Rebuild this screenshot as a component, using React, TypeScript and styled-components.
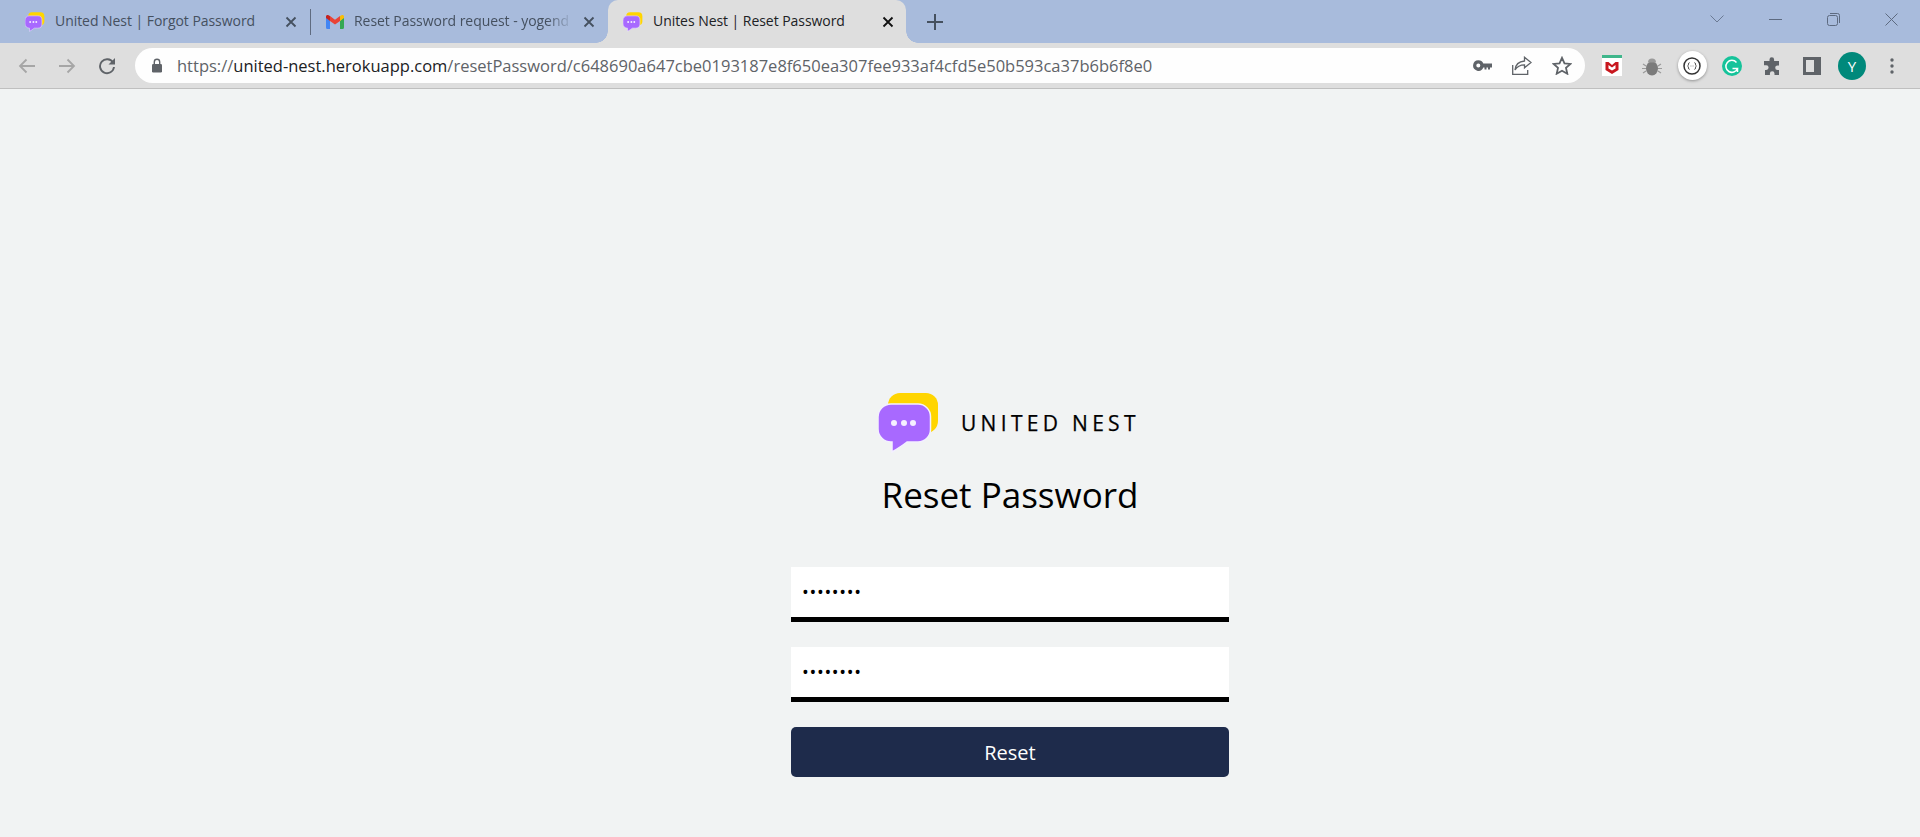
import React from "react";
import styled, { createGlobalStyle } from "styled-components";

const Global = createGlobalStyle`
  html, body { margin: 0; padding: 0; background: #f1f3f3; }
  * { box-sizing: border-box; }
  body { font-family: "Open Sans", "Noto Sans", sans-serif; }
`;

const Shell = styled.div`
  width: 1920px;
  height: 837px;
  display: flex;
  flex-direction: column;
  overflow: hidden;
`;

const TabStrip = styled.div`
  height: 43px;
  background: #a8bbdc;
  display: flex;
  align-items: stretch;
  padding-left: 10px;
`;

const Tab = styled.div<{ $w: number; $active?: boolean }>`
  position: relative;
  width: ${(p) => p.$w}px;
  flex: none;
  display: flex;
  align-items: center;
  padding-left: 15px;
  background: ${(p) => (p.$active ? "#dedede" : "transparent")};
  border-radius: ${(p) => (p.$active ? "10px 10px 0 0" : "0")};
  color: ${(p) => (p.$active ? "#202124" : "#45505f")};
  ${(p) =>
    p.$active
      ? `
    &::before, &::after {
      content: "";
      position: absolute;
      bottom: 0;
      width: 12px;
      height: 12px;
    }
    &::before {
      left: -12px;
      background: radial-gradient(circle at 0 0, transparent 11.5px, #dedede 12px);
    }
    &::after {
      right: -12px;
      background: radial-gradient(circle at 100% 0, transparent 11.5px, #dedede 12px);
    }
  `
      : ""}
`;

const TabTitle = styled.span<{ $w: number; $fade?: boolean }>`
  width: ${(p) => p.$w}px;
  margin-left: 10px;
  padding-bottom: 3px;
  font-family: "Open Sans", sans-serif;
  font-size: 14px;
  letter-spacing: -0.05px;
  white-space: nowrap;
  ${(p) =>
    p.$fade
      ? `-webkit-mask-image: linear-gradient(90deg, #000 88%, transparent 100%); mask-image: linear-gradient(90deg, #000 88%, transparent 100%);`
      : ""}
`;

const TabClose = styled.svg<{ $right: number }>`
  width: 12px;
  height: 12px;
  flex: none;
  margin-left: auto;
  margin-right: ${(p) => p.$right}px;
`;

const TabDivider = styled.div`
  width: 1px;
  height: 26px;
  align-self: center;
  background: #5f6b80;
  flex: none;
`;

const TabGap = styled.div<{ $w: number }>`
  width: ${(p) => p.$w}px;
  flex: none;
`;

const NewTab = styled.svg`
  width: 16px;
  height: 16px;
  flex: none;
  align-self: center;
  margin-left: 21px;
`;

const WindowControls = styled.div`
  margin-left: auto;
  display: flex;
  height: 43px;
`;

const WindowButton = styled.div`
  width: 58px;
  display: flex;
  align-items: center;
  justify-content: center;
  padding-bottom: 5px;
`;

const Toolbar = styled.div`
  height: 46px;
  background: #dedede;
  border-bottom: 1px solid #bfbfbf;
  display: flex;
  align-items: center;
  padding: 5px 8px 5px 7px;
`;

const NavButton = styled.div`
  width: 40px;
  height: 35px;
  flex: none;
  display: flex;
  align-items: center;
  justify-content: center;
`;

const Omnibox = styled.div`
  width: 1450px;
  height: 35px;
  flex: none;
  margin: 0 7px 0 8px;
  background: #fefefe;
  border-radius: 18px;
  display: flex;
  align-items: center;
  padding-left: 16px;
`;

const UrlText = styled.div`
  margin-left: 14px;
  font-family: "Open Sans", sans-serif;
  font-size: 16.5px;
  color: #5f6368;
  white-space: nowrap;
`;

const UrlHost = styled.span`
  color: #202124;
`;

const OmniIcons = styled.div`
  margin-left: auto;
  margin-right: 3px;
  display: flex;
  align-items: center;
`;

const OmniIcon = styled.div`
  width: 40px;
  display: flex;
  justify-content: center;
  align-items: center;
`;

const ExtensionHalo = styled.div`
  width: 29px;
  height: 29px;
  border-radius: 50%;
  background: #fff;
  box-shadow: 0 1px 3px rgba(0, 0, 0, 0.35);
  display: flex;
  align-items: center;
  justify-content: center;
`;

const Avatar = styled.div`
  width: 28px;
  height: 28px;
  border-radius: 50%;
  background: #00897b;
  color: #fff;
  font-family: "Open Sans", sans-serif;
  font-size: 15px;
  display: flex;
  align-items: center;
  justify-content: center;
`;

const Page = styled.main`
  flex: 1;
  background: #f1f3f3;
  display: flex;
  flex-direction: column;
  align-items: center;
  padding: 304px 0 0 100px;
`;

const Brand = styled.div`
  display: flex;
  align-items: center;
  width: 264px;
  height: 60px;
`;

const BrandName = styled.div`
  margin-left: 21px;
  font-family: "Open Sans", sans-serif;
  font-size: 21px;
  font-weight: 400;
  letter-spacing: 4.3px;
  color: #000;
  white-space: nowrap;
  -webkit-text-stroke: 0.25px #000;
`;

const Title = styled.h1`
  margin: 17px 0 0;
  font-family: "Open Sans", sans-serif;
  font-size: 35px;
  line-height: 49px;
  font-weight: 400;
  color: #000;
`;

const Form = styled.form`
  margin-top: 48px;
  width: 438px;
  display: flex;
  flex-direction: column;
  gap: 25px;
`;

const PasswordInput = styled.input`
  display: block;
  width: 100%;
  height: 55px;
  border: 0;
  border-bottom: 5px solid #000;
  background: #fff;
  outline: none;
  padding: 0 11px 1px;
  font-family: "Open Sans", sans-serif;
  font-size: 18px;
  letter-spacing: 0.7px;
  color: #000;
`;

const ResetButton = styled.button`
  width: 100%;
  height: 50px;
  border: 0;
  border-radius: 5px;
  background: #1e2b4b;
  color: #fff;
  font-family: "Open Sans", sans-serif;
  font-size: 20px;
`;

const LogoShapes = () => (
  <>
    <path d="M22 0h26a12 12 0 0 1 12 12v16a12 12 0 0 1-12 12H22a12 12 0 0 1-12-12V12A12 12 0 0 1 22 0Z" fill="#ffd500" />
    <path
      d="M13 11h27a12.500 12.500 0 0 1 12.500 12.500v13A12.500 12.500 0 0 1 40 49H29C24 53 19 56 14 59V49A13 13 0 0 1 0 36V24A13 13 0 0 1 13 11Z"
      fill="#a869ff"
      stroke="#f3f0ff"
      strokeWidth="1.500"
    />
    <circle cx="16" cy="30" r="3" fill="#f5f0ff" />
    <circle cx="26" cy="30" r="3" fill="#f5f0ff" />
    <circle cx="35" cy="30" r="3" fill="#f5f0ff" />
  </>
);

const Favicon = () => (
  <svg width="20" height="20" viewBox="0 0 62 60" style={{ flex: "none" }}>
    <LogoShapes />
  </svg>
);

const Gmail = () => (
  <svg width="18" height="14" viewBox="0 0 18 14" style={{ flex: "none" }}>
    <path d="M0 2v10.500A1.500 1.500 0 0 0 1.500 14H4V6Z" fill="#4285f4" />
    <path d="M14 14h2.500a1.500 1.500 0 0 0 1.500-1.500V2l-4 4Z" fill="#34a853" />
    <path d="M14 1v5l4-3V1.500C18 .2 16.500-.5 15.500.3Z" fill="#fbbc04" />
    <path d="M4 6V1l5 3.800L14 1v5L9 9.500Z" fill="#ea4335" />
    <path d="M0 1.500V3l4 3V1L2.500.3C1.500-.5 0 .2 0 1.500Z" fill="#c5221f" />
  </svg>
);

const CloseIcon = ({ color, right }: { color: string; right: number }) => (
  <TabClose $right={right} viewBox="0 0 12 12">
    <path d="M1.500 1.500l9 9M10.500 1.500l-9 9" stroke={color} strokeWidth="1.800" fill="none" />
  </TabClose>
);

const App = () => (
  <Shell>
    <Global />
    <TabStrip>
      <Tab $w={300}>
        <Favicon />
        <TabTitle $w={212}>United Nest | Forgot Password</TabTitle>
        <CloseIcon color="#45505f" right={13} />
      </Tab>
      <TabDivider />
      <Tab $w={285}>
        <Gmail />
        <TabTitle $w={219} $fade>
          Reset Password request - yogend
        </TabTitle>
        <CloseIcon color="#45505f" right={1} />
      </Tab>
      <TabGap $w={12} />
      <Tab $w={298} $active>
        <Favicon />
        <TabTitle $w={212}>Unites Nest | Reset Password</TabTitle>
        <CloseIcon color="#111" right={12} />
      </Tab>
      <NewTab viewBox="0 0 16 16">
        <path d="M8 0v16M0 8h16" stroke="#45505f" strokeWidth="2" fill="none" />
      </NewTab>
      <WindowControls>
        <WindowButton>
          <svg width="14" height="8" viewBox="0 0 14 8">
            <path d="M.5.500 7 7 13.500.500" stroke="#6b7a94" fill="none" />
          </svg>
        </WindowButton>
        <WindowButton>
          <svg width="13" height="1" viewBox="0 0 13 1">
            <path d="M0 .500h13" stroke="#5d6a80" fill="none" />
          </svg>
        </WindowButton>
        <WindowButton>
          <svg width="13" height="13" viewBox="0 0 13 13">
            <rect x=".5" y="2.500" width="10" height="10" rx="2" stroke="#5d6a80" fill="none" />
            <path d="M3 .500h7.500a2 2 0 0 1 2 2V10" stroke="#5d6a80" fill="none" />
          </svg>
        </WindowButton>
        <WindowButton>
          <svg width="13" height="13" viewBox="0 0 13 13">
            <path d="M.5.500l12 12M12.500.500l-12 12" stroke="#5d6a80" fill="none" />
          </svg>
        </WindowButton>
      </WindowControls>
    </TabStrip>
    <Toolbar>
      <NavButton>
        <svg width="18" height="16" viewBox="0 0 18 16">
          <path d="M17 8H2M8.500 1.500 2 8l6.500 6.500" stroke="#a6a6a6" strokeWidth="1.800" fill="none" />
        </svg>
      </NavButton>
      <NavButton>
        <svg width="18" height="16" viewBox="0 0 18 16">
          <path d="M1 8h15M9.500 1.500 16 8l-6.500 6.500" stroke="#a6a6a6" strokeWidth="1.800" fill="none" />
        </svg>
      </NavButton>
      <NavButton>
        <svg width="18" height="18" viewBox="0 0 18 18">
          <path d="M15 5.500A7 7 0 1 0 16 10" stroke="#5f6368" strokeWidth="1.900" fill="none" />
          <path d="M17 1v6.500h-6.500Z" fill="#5f6368" />
        </svg>
      </NavButton>
      <Omnibox>
        <svg width="12" height="15" viewBox="0 0 12 15" style={{ flex: "none" }}>
          <rect x="1" y="6" width="10" height="8.500" rx="1.200" fill="#5f6368" />
          <path d="M3.300 6V4a2.700 2.700 0 0 1 5.400 0v2" stroke="#5f6368" strokeWidth="1.400" fill="none" />
        </svg>
        <UrlText>
          https://<UrlHost>united-nest.herokuapp.com</UrlHost>
          /resetPassword/c648690a647cbe0193187e8f650ea307fee933af4cfd5e50b593ca37b6b6f8e0
        </UrlText>
        <OmniIcons>
          <OmniIcon>
            <svg width="19" height="11" viewBox="0 0 19 11">
              <path
                fillRule="evenodd"
                d="M5.300.2A5.300 5.300 0 0 1 10.300 3.500H19V7.500H17V9.500H15V7.500H13.500V9.500H11.500V7.500H10.300A5.300 5.300 0 1 1 5.300.2ZM5.300 3.500a2 2 0 1 0 0 4 2 2 0 0 0 0-4Z"
                fill="#5f6368"
              />
            </svg>
          </OmniIcon>
          <OmniIcon>
            <svg width="20" height="19" viewBox="0 0 20 19">
              <path d="M.7 9v9.300h15V14M12.500 1.200 19 6.500l-6.500 5.300V8.800C8 8.800 5 10.500 3 14c.5-5.500 4-8.500 9.500-9Z" stroke="#5f6368" strokeWidth="1.300" fill="none" />
            </svg>
          </OmniIcon>
          <OmniIcon>
            <svg width="20" height="19" viewBox="0 0 20 19">
              <path d="M10 1.800l2.500 5.500 5.900.6-4.400 4 1.300 5.800L10 14.700l-5.300 3 1.300-5.800-4.400-4 5.900-.6Z" stroke="#5f6368" strokeWidth="1.800" fill="none" />
            </svg>
          </OmniIcon>
        </OmniIcons>
      </Omnibox>
      <NavButton>
        <svg width="20" height="21" viewBox="0 0 20 21">
          <rect width="20" height="21" fill="#fff" />
          <rect width="20" height="3" fill="#3fb68b" />
          <path d="M3.500 7h3L10 10l3.500-3h3v8L10 19l-6.500-4Z" fill="#c8171e" />
          <path d="M6.500 10v3.500L10 15.500l3.500-2V10L10 12.500Z" fill="#fff" />
        </svg>
      </NavButton>
      <NavButton>
        <svg width="20" height="20" viewBox="0 0 20 20">
          <ellipse cx="10" cy="12.500" rx="6" ry="7" fill="#7b7b7b" />
          <path d="M6 6.500a4 4 0 0 1 8 0Z" fill="#9a9a9a" />
          <path d="M1 8l3 2M19 8l-3 2M0 12.500h4M20 12.500h-4M1 17l3-2M19 17l-3-2" stroke="#9a9a9a" strokeWidth="1.200" />
        </svg>
      </NavButton>
      <NavButton>
        <ExtensionHalo>
          <svg width="18" height="18" viewBox="0 0 18 18">
            <circle cx="9" cy="9" r="8" stroke="#333" strokeWidth="1.500" fill="none" />
            <path d="M6.500 5.500C5 5.500 6 8.800 4.600 9 6 9.200 5 12.500 6.500 12.500M11.500 5.500C13 5.500 12 8.800 13.400 9 12 9.200 13 12.500 11.500 12.500" stroke="#333" strokeWidth=".9" fill="none" />
            <path d="M7.500 9h.6M8.700 9h.6M9.900 9h.6" stroke="#777" strokeWidth=".9" />
          </svg>
        </ExtensionHalo>
      </NavButton>
      <NavButton>
        <svg width="20" height="20" viewBox="0 0 20 20">
          <circle cx="10" cy="10" r="10" fill="#15c39a" />
          <path d="M14.500 6.500A6 6 0 1 0 15.500 12.500H10.500M15.500 12.500V16" stroke="#fff" strokeWidth="1.500" fill="none" />
        </svg>
      </NavButton>
      <NavButton>
        <svg width="18" height="18" viewBox="0 0 18 18">
          <path d="M6.500 2.500a2.300 2.300 0 0 1 4.600 0V4H16v4.500h-1.500a2.300 2.300 0 0 0 0 4.600H16V18H11.500v-1.500a2.300 2.300 0 0 0-4.600 0V18H2v-5h1.200a2.400 2.400 0 0 0 0-4.800H1V4h5.500Z" fill="#5f6368" />
        </svg>
      </NavButton>
      <NavButton>
        <svg width="18" height="18" viewBox="0 0 18 18">
          <path d="M0 0h18v18H0Zm3 3v12h8V3Z" fill="#5f6368" fillRule="evenodd" />
          <rect x="11" y="2" width="5" height="14" fill="#5f6368" />
        </svg>
      </NavButton>
      <NavButton>
        <Avatar>Y</Avatar>
      </NavButton>
      <NavButton>
        <svg width="4" height="16" viewBox="0 0 4 16">
          <circle cx="2" cy="2" r="1.700" fill="#5f6368" />
          <circle cx="2" cy="8" r="1.700" fill="#5f6368" />
          <circle cx="2" cy="14" r="1.700" fill="#5f6368" />
        </svg>
      </NavButton>
    </Toolbar>
    <Page>
      <Brand>
        <svg width="62" height="60" viewBox="0 0 62 60" style={{ flex: "none" }}>
          <LogoShapes />
        </svg>
        <BrandName>UNITED NEST</BrandName>
      </Brand>
      <Title>Reset Password</Title>
      <Form onSubmit={(e) => e.preventDefault()}>
        <PasswordInput type="password" defaultValue="password" aria-label="New password" />
        <PasswordInput type="password" defaultValue="password" aria-label="Confirm password" />
        <ResetButton type="submit">Reset</ResetButton>
      </Form>
    </Page>
  </Shell>
);

export default App;
